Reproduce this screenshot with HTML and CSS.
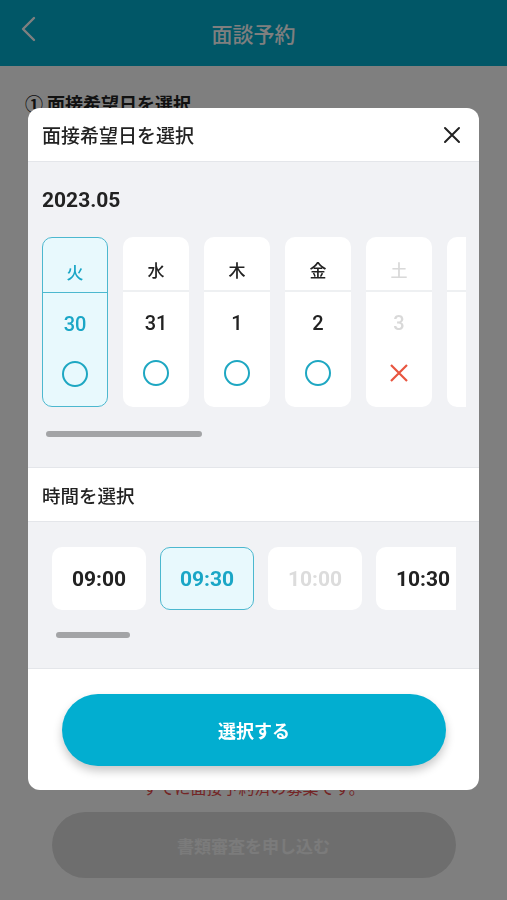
FILE: index.html
```html
<!DOCTYPE html>
<html lang="ja">
<head>
    <meta charset="UTF-8">
    <meta name="viewport" content="width=device-width, initial-scale=1.0">
    <title>面談予約</title>
    <link rel="stylesheet" href="styles.css">
</head>
<body>
    <!-- Page behind the dialog -->
    <header class="app-bar">
        <svg class="back" width="18" height="26" viewBox="0 0 18 26"><path d="M15 2 L4 13 L15 24" fill="none" stroke="#fff" stroke-width="2.4" stroke-linecap="round" stroke-linejoin="round"/></svg>
        <h1>面談予約</h1>
    </header>
    <main class="page">
        <h2 class="step">① 面接希望日を選択</h2>
        <div class="spacer"></div>
        <p class="notice">すでに面接予約済の募集です。</p>
        <button class="apply" disabled>書類審査を申し込む</button>
    </main>

    <!-- Date picker dialog -->
    <div class="overlay">
        <div class="dialog">
            <div class="dialog-head">
                <span>面接希望日を選択</span>
                <svg width="18" height="18" viewBox="0 0 18 18"><path d="M2 2 L16 16 M16 2 L2 16" stroke="#222" stroke-width="2" stroke-linecap="round"/></svg>
            </div>

            <div class="date-area">
                <div class="month">2023.05</div>
                <div class="day-row">
                    <div class="day selected">
                        <div class="dow">火</div>
                        <div class="num">30</div>
                        <span class="ok"></span>
                    </div>
                    <div class="day">
                        <div class="dow">水</div>
                        <div class="num">31</div>
                        <span class="ok"></span>
                    </div>
                    <div class="day">
                        <div class="dow">木</div>
                        <div class="num">1</div>
                        <span class="ok"></span>
                    </div>
                    <div class="day">
                        <div class="dow">金</div>
                        <div class="num">2</div>
                        <span class="ok"></span>
                    </div>
                    <div class="day off">
                        <div class="dow">土</div>
                        <div class="num">3</div>
                        <svg class="ng" width="20" height="20" viewBox="0 0 20 20"><path d="M2 2 L18 18 M18 2 L2 18" stroke="#e8553f" stroke-width="2.2"/></svg>
                    </div>
                    <!-- next card peeks in at the edge -->
                    <div class="day">
                        <div class="dow"></div>
                    </div>
                </div>
                <div class="scroll-thumb wide"></div>
            </div>

            <div class="sub-head">時間を選択</div>

            <div class="time-area">
                <div class="time-row">
                    <div class="time">09:00</div>
                    <div class="time selected">09:30</div>
                    <div class="time off">10:00</div>
                    <div class="time">10:30</div>
                </div>
                <div class="scroll-thumb short"></div>
            </div>

            <div class="dialog-foot">
                <button class="choose">選択する</button>
            </div>
        </div>
    </div>
</body>
</html>
```

FILE: styles.css
```css
* {
    box-sizing: border-box;
}
body {
    margin: 0;
    font-family: 'Noto Sans CJK JP', 'Noto Sans', sans-serif;
    background: #fff;
    color: #222;
}

/* Page behind */
.app-bar {
    height: 66px;
    background: #02aece;
    display: flex;
    align-items: center;
    justify-content: center;
    position: relative;
}
.app-bar h1 {
    margin: 0;
    color: #fff;
    font-size: 21px;
    font-weight: 500;
}
.app-bar .back {
    position: absolute;
    left: 19px;
    top: 16px;
}
.page {
    padding: 20px 25px 0;
    display: flex;
    flex-direction: column;
}
.step {
    margin: 0;
    font-size: 18px;
    font-weight: 700;
    line-height: 34px;
}
.spacer {
    height: 652px;
}
.notice {
    margin: 0;
    text-align: center;
    color: #e84a4a;
    font-size: 16px;
    line-height: 30px;
}
.apply {
    margin: 10px auto 0;
    width: 404px;
    height: 66px;
    border: none;
    border-radius: 33px;
    background: #dddddd;
    color: #f6f6f6;
    font-family: inherit;
    font-size: 17px;
    font-weight: 700;
}

/* Dialog */
.overlay {
    position: fixed;
    inset: 0;
    background: rgba(0, 0, 0, 0.5);
    display: flex;
    justify-content: center;
    align-items: flex-start;
    padding-top: 108px;
}
.dialog {
    width: 451px;
    background: #fff;
    border-radius: 12px;
    overflow: hidden;
}
.dialog-head {
    height: 54px;
    display: flex;
    align-items: center;
    justify-content: space-between;
    padding: 0 18px 0 14px;
    font-size: 19px;
    font-weight: 500;
    color: #222;
    border-bottom: 1px solid #e4e6ea;
}
.date-area {
    background: #f1f2f5;
    padding: 24px 13px 30px 14px;
    border-bottom: 1px solid #e4e6ea;
}
.month {
    font-family: Roboto, sans-serif;
    font-size: 21px;
    font-weight: 700;
    line-height: 28px;
    color: #222;
}
.day-row {
    display: flex;
    gap: 15px;
    margin-top: 23px;
    overflow: hidden;
}
.day {
    flex: 0 0 66px;
    height: 170px;
    background: #fff;
    border-radius: 10px;
    display: flex;
    flex-direction: column;
    align-items: center;
}
.dow {
    width: 100%;
    height: 55px;
    display: flex;
    align-items: center;
    justify-content: center;
    padding-top: 12px;
    font-size: 17px;
    font-weight: 500;
    border-bottom: 2px solid #eef0f2;
}
.num {
    margin-top: 16px;
    line-height: 30px;
    font-family: Roboto, sans-serif;
    font-size: 20px;
    font-weight: 500;
}
.ok {
    margin-top: 22px;
    width: 26px;
    height: 26px;
    border: 2.5px solid #1ea7c2;
    border-radius: 50%;
}
.ng {
    margin-top: 25px;
}
.day.selected {
    background: #e8f9fd;
    border: 1.5px solid #4cb8cf;
    color: #1aa6c6;
}
.day.selected .dow {
    border-bottom-color: #4cb8cf;
    border-bottom-width: 1.5px;
}
.day.off {
    color: #d9d9d9;
}
.scroll-thumb {
    height: 6px;
    border-radius: 3px;
    background: #a3a4a6;
}
.scroll-thumb.wide {
    width: 156px;
    margin: 24px 0 0 4px;
}
.sub-head {
    height: 54px;
    display: flex;
    align-items: center;
    padding-left: 14px;
    font-size: 18.5px;
    font-weight: 500;
    border-bottom: 1px solid #e4e6ea;
}
.time-area {
    background: #f1f2f5;
    padding: 25px 23px 30px 24px;
    border-bottom: 1px solid #e4e6ea;
}
.time-row {
    display: flex;
    gap: 14px;
    overflow: hidden;
}
.time {
    flex: 0 0 94px;
    height: 63px;
    background: #fff;
    border-radius: 10px;
    display: flex;
    align-items: center;
    justify-content: center;
    font-family: Roboto, sans-serif;
    font-size: 21px;
    font-weight: 700;
    color: #222;
}
.time.selected {
    background: #e8f9fd;
    border: 1.5px solid #4cb8cf;
    color: #1aa6c6;
}
.time.off {
    color: #dcdcdc;
}
.scroll-thumb.short {
    width: 74px;
    margin: 22px 0 0 4px;
}
.dialog-foot {
    padding: 25px 33px 24px 34px;
}
.choose {
    width: 100%;
    height: 72px;
    border: none;
    border-radius: 36px;
    background: #02aed0;
    color: #fff;
    font-family: inherit;
    font-size: 18px;
    font-weight: 700;
    box-shadow: 0 5px 10px rgba(0, 0, 0, 0.22);
}
```
